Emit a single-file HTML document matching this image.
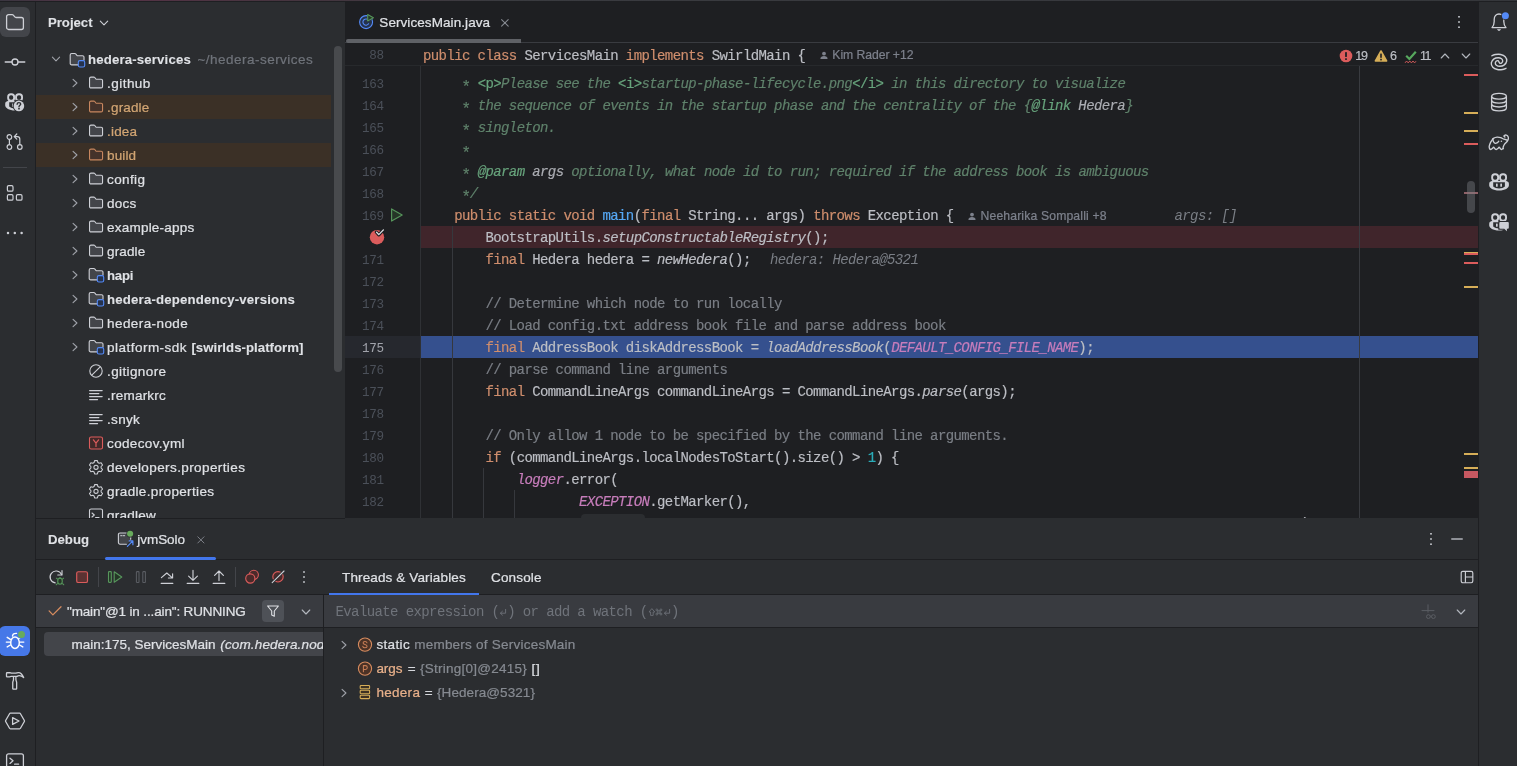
<!DOCTYPE html>
<html><head><meta charset="utf-8"><title>ServicesMain.java</title>
<style>
*{box-sizing:border-box;margin:0;padding:0}
html,body{width:1517px;height:766px;overflow:hidden;background:#2B2D30}
body{position:relative;font-family:"Liberation Sans", sans-serif;font-size:13px;color:#DFE1E5}
#root{position:absolute;left:0;top:0;width:1517px;height:766px;will-change:transform}
.a{position:absolute}
.t{position:absolute;white-space:pre;line-height:20px;height:20px;-webkit-text-stroke:0.22px}
#ed{position:absolute;left:345px;top:1px;width:1133px;height:517px;background:#1E1F22;overflow:hidden}
.cl{position:absolute;left:78px;white-space:pre;font-family:"Liberation Mono", monospace;font-size:14px;letter-spacing:-0.6px;line-height:22px;height:22px;color:#BCBEC4;-webkit-text-stroke:0.18px}
.ln{position:absolute;left:0;width:38.6px;text-align:right;font-family:"Liberation Mono", monospace;font-size:12.6px;letter-spacing:-0.36px;padding-top:1px;line-height:22px;height:22px;color:#4B5059}
.ln.cur{color:#A1A3AB}
.as{display:inline-block;position:relative;top:4.4px;font-style:normal;transform:scale(1.12);line-height:10px}
.k{color:#CF8E6D} .c{color:#7A7E85} .dc{color:#5F826B;font-style:italic} .dm{color:#67A37C} .dt{color:#67A37C;font-style:italic}
.dp{color:#ABADB3;font-style:italic} .fn{color:#56A8F5} .sf{color:#C77DBB;font-style:italic} .nu{color:#2AACB8} .i{font-style:italic}
.hint{position:absolute;white-space:pre;font-family:"Liberation Mono", monospace;font-size:14px;letter-spacing:-0.6px;line-height:22px;color:#7A7E85;font-style:italic}
</style></head>
<body>
<div id="root">

<!-- top edge -->
<div class="a" style="left:0;top:0;width:1517px;height:1px;background:linear-gradient(90deg,#3A3640 0,#573347 100px,#45353F 300px,#3A3B40 500px,#35373B 1517px)"></div>
<div class="a" style="left:0;top:1px;width:1517px;height:1px;background:#1E1F22"></div>
<!-- left stripe -->
<div class="a" style="left:35px;top:1px;width:1px;height:765px;background:#1E1F22"></div>
<div class="a" style="left:0;top:7px;width:30px;height:30px;border-radius:6px;background:#43454A"></div>
<svg style="position:absolute;left:5px;top:12px;" width="20" height="20" viewBox="0 0 20 20" fill="none"><path d="M1.6 4.6 a2 2 0 0 1 2 -2 h3.5 a1.6 1.6 0 0 1 1.2 .55 l1.5 1.8 a1.6 1.6 0 0 0 1.2 .55 h5.4 a2 2 0 0 1 2 2 v8 a2 2 0 0 1 -2 2 h-12.8 a2 2 0 0 1 -2 -2 z" stroke="#CED0D6" stroke-width="1.3"/></svg>
<svg style="position:absolute;left:4px;top:54px;" width="22" height="16" viewBox="0 0 22 16" fill="none"><circle cx="11" cy="8" r="3" stroke="#CED0D6" stroke-width="1.3"/><path d="M1.2 8H8M14 8h6.8" stroke="#CED0D6" stroke-width="1.3" stroke-linecap="round"/></svg>
<svg style="position:absolute;left:1px;top:88px;" width="28" height="28" viewBox="0 0 28 28" fill="none"><mask id="mq" maskUnits="userSpaceOnUse" x="0" y="0" width="28" height="28"><rect width="28" height="28" fill="#fff"/><circle cx="17.9" cy="17.9" r="6.3" fill="#000"/><rect x="14" y="12.9" width="14" height="15" fill="#000"/></mask><g mask="url(#mq)"><path d="M6.8 13.1 C5 13.6 4.2 14.6 4.2 15.8 V17.4 C4.2 19.6 8 22.5 14.05 22.5 C20.1 22.5 23.9 19.6 23.9 17.4 V15.8 C23.9 14.6 23.1 13.6 21.3 13.1 Z" fill="#CED0D6"/><path d="M8.2 14.3 H19.9 V18.6 C18.6 19.8 16.4 20.5 14.05 20.5 C11.7 20.5 9.5 19.8 8.2 18.6 Z" fill="#2B2D30"/><rect x="11" y="15.4" width="1.7" height="3.3" rx=".5" fill="#CED0D6"/><rect x="15.3" y="15.4" width="1.7" height="3.3" rx=".5" fill="#CED0D6"/><rect x="7.15" y="6.25" width="6" height="6.4" rx="2.7" stroke="#CED0D6" stroke-width="1.9" fill="#2B2D30"/><rect x="15.05" y="6.25" width="6" height="6.4" rx="2.7" stroke="#CED0D6" stroke-width="1.9" fill="#2B2D30"/></g><circle cx="17.9" cy="17.9" r="5.3" fill="#CED0D6"/><path d="M16.1 16.3 C16.1 15.2 16.9 14.6 17.9 14.6 C19 14.6 19.7 15.2 19.7 16.1 C19.7 17.3 18 17.4 18 18.7" stroke="#2B2D30" stroke-width="1.35" stroke-linecap="round"/><circle cx="18" cy="20.7" r=".9" fill="#2B2D30"/></svg>
<svg style="position:absolute;left:5px;top:132px;" width="20" height="20" viewBox="0 0 20 20" fill="none"><circle cx="4.4" cy="5" r="2.3" stroke="#CED0D6" stroke-width="1.2"/><circle cx="4.4" cy="15" r="2.3" stroke="#CED0D6" stroke-width="1.2"/><circle cx="14.8" cy="15" r="2.3" stroke="#CED0D6" stroke-width="1.2"/><path d="M4.4 7.4V12.6" stroke="#CED0D6" stroke-width="1.2"/><path d="M14.8 12.6 V7 a2.4 2.4 0 0 0 -2.4 -2.4 H9.4 M11.8 2 L9.2 4.6 L11.8 7.2" stroke="#CED0D6" stroke-width="1.2" stroke-linecap="round" stroke-linejoin="round"/></svg>
<div style="position:absolute;left:3px;top:167px;width:24px;height:1px;background:#43454A"></div>
<svg style="position:absolute;left:5px;top:183px;" width="20" height="20" viewBox="0 0 20 20" fill="none"><rect x="2.4" y="2.6" width="5.6" height="5.6" rx="1.3" stroke="#CED0D6" stroke-width="1.2"/><rect x="2.4" y="11.6" width="5.6" height="5.6" rx="1.3" stroke="#CED0D6" stroke-width="1.2"/><rect x="11.4" y="11.6" width="5.6" height="5.6" rx="1.3" stroke="#CED0D6" stroke-width="1.2"/></svg>
<svg style="position:absolute;left:5px;top:229px;" width="20" height="8" viewBox="0 0 20 8" fill="none"><circle cx="3" cy="4" r="1.25" fill="#CED0D6"/><circle cx="9.8" cy="4" r="1.25" fill="#CED0D6"/><circle cx="16.6" cy="4" r="1.25" fill="#CED0D6"/></svg>
<div style="position:absolute;left:-1px;top:626px;width:31px;height:30px;border-radius:6px;background:#4678E8"></div>
<svg style="position:absolute;left:0px;top:623px;" width="36" height="36" viewBox="0 0 36 36" fill="none"><ellipse cx="15" cy="19.7" rx="4.3" ry="5.8" stroke="#fff" stroke-width="1.45"/><path d="M12.5 13.1 C12.6 11.2 14 10.3 16.6 10.4" stroke="#fff" stroke-width="1.4" stroke-linecap="round"/><path d="M7.2 14.3 L10.4 16.4 M6.3 19.1 H10.6 M7.2 23.9 L10.4 22 M19.6 19.1 H23.8 M19.6 22 L22.8 23.9 M18.8 15.4 L20 14.6" stroke="#fff" stroke-width="1.4" stroke-linecap="round"/><circle cx="21.5" cy="11.5" r="4.1" fill="#4678E8"/><circle cx="21.5" cy="11.5" r="3.5" fill="#68AB5C"/></svg>
<svg style="position:absolute;left:1px;top:667px;" width="28" height="28" viewBox="0 0 28 28" fill="none"><path d="M5.5 6.4 a.65 .65 0 0 1 .65 -.65 H8.8 c.7 0 1.1 .35 1.8 .35 h3.6 c1.3 0 2.2 -.55 3.4 -.55 c2.3 0 3.7 1.9 5.1 5 c-1.6 -1.5 -3 -2 -4.6 -2 c-.9 0 -1.6 .5 -2.2 .9 H10.2 c-.7 0 -1.2 .45 -1.9 .45 H6.15 a.65 .65 0 0 1 -.65 -.65 Z" stroke="#CED0D6" stroke-width="1.3" stroke-linejoin="round"/><path d="M12.5 9.9 V12.6 c0 1.1 -.75 1.7 -.75 2.9 V21.4 a.8 .8 0 0 0 .8 .8 h2.3 a.8 .8 0 0 0 .8 -.8 V15.5 c0 -1.2 -.75 -1.8 -.75 -2.9 V9.9" stroke="#CED0D6" stroke-width="1.3" stroke-linejoin="round"/></svg>
<svg style="position:absolute;left:4px;top:711px;" width="22" height="20" viewBox="0 0 22 20" fill="none"><path d="M6.4 2.2 h9.2 a1 1 0 0 1 .85 .5 l3.9 6.8 a1 1 0 0 1 0 1 l-3.9 6.8 a1 1 0 0 1 -.85 .5 h-9.2 a1 1 0 0 1 -.85 -.5 l-3.9 -6.8 a1 1 0 0 1 0 -1 l3.9 -6.8 a1 1 0 0 1 .85 -.5 z" stroke="#CED0D6" stroke-width="1.3"/><path d="M8.6 6.6 L15 10 L8.6 13.4 Z" stroke="#CED0D6" stroke-width="1.3" stroke-linejoin="round"/></svg>
<svg style="position:absolute;left:5px;top:752px;" width="20" height="20" viewBox="0 0 20 20" fill="none"><rect x="1.6" y="1.8" width="16.8" height="15" rx="2" stroke="#CED0D6" stroke-width="1.3"/><path d="M5 6.2 L8 8.8 L5 11.4 M9.6 12.2 h4" stroke="#CED0D6" stroke-width="1.3" stroke-linecap="round" stroke-linejoin="round"/></svg>
<!-- project panel -->
<div class="a" style="left:36px;top:95px;width:295px;height:24px;background:#3B3026"></div>
<div class="a" style="left:36px;top:143px;width:295px;height:24px;background:#3B3026"></div>
<div class="a" style="left:36px;top:1px;width:309px;height:517px;overflow:hidden">
 <div class="a" style="left:-36px;top:-1px;width:345px;height:518px">
 <svg style="position:absolute;left:50.2px;top:55.3px;" width="12" height="8" viewBox="0 0 12 8" fill="none"><path d="M2.4 2.2 L6 5.8 L9.6 2.2" stroke="#A0A3AA" stroke-width="1.1" stroke-linecap="round" stroke-linejoin="round"/></svg>
<svg style="position:absolute;left:68.6px;top:51.6px;" width="18" height="16" viewBox="0 0 18 16" fill="none"><path d="M10 12.9 h-7.3 a1.5 1.5 0 0 1 -1.5 -1.5 v-8.4 a1.5 1.5 0 0 1 1.5 -1.5 h3.1 a1.2 1.2 0 0 1 .9 .4 l1.2 1.4 a1.2 1.2 0 0 0 .9 .4 h4.7 a1.5 1.5 0 0 1 1.5 1.5 v3.4" stroke="#CED0D6" stroke-width="1.1" fill="#43454A"/><rect x="9.3" y="8.6" width="6.4" height="6.4" rx="1.6" fill="#25324D" stroke="#548AF7" stroke-width="1.1"/></svg>
<svg style="position:absolute;left:71px;top:77.3px;" width="8" height="12" viewBox="0 0 8 12" fill="none"><path d="M2.05 2.4 L5.95 6 L2.05 9.6" stroke="#A0A3AA" stroke-width="1.1" stroke-linecap="round" stroke-linejoin="round"/></svg>
<svg style="position:absolute;left:88.1px;top:75.3px;" width="16" height="14" viewBox="0 0 16 14" fill="none"><path d="M1.55 3.5 a1.4 1.4 0 0 1 1.4 -1.4 h2.9 a1.2 1.2 0 0 1 .9 .4 l1.1 1.3 a1.2 1.2 0 0 0 .9 .4 h4.4 a1.4 1.4 0 0 1 1.4 1.4 v5.9 a1.4 1.4 0 0 1 -1.4 1.4 h-10.2 a1.4 1.4 0 0 1 -1.4 -1.4 z" stroke="#CED0D6" stroke-width="1.1" fill="#43454A"/></svg>
<svg style="position:absolute;left:71px;top:101.3px;" width="8" height="12" viewBox="0 0 8 12" fill="none"><path d="M2.05 2.4 L5.95 6 L2.05 9.6" stroke="#A0A3AA" stroke-width="1.1" stroke-linecap="round" stroke-linejoin="round"/></svg>
<svg style="position:absolute;left:88.1px;top:99.3px;" width="16" height="14" viewBox="0 0 16 14" fill="none"><path d="M1.55 3.5 a1.4 1.4 0 0 1 1.4 -1.4 h2.9 a1.2 1.2 0 0 1 .9 .4 l1.1 1.3 a1.2 1.2 0 0 0 .9 .4 h4.4 a1.4 1.4 0 0 1 1.4 1.4 v5.9 a1.4 1.4 0 0 1 -1.4 1.4 h-10.2 a1.4 1.4 0 0 1 -1.4 -1.4 z" stroke="#C8875F" stroke-width="1.1" fill="#44322A"/></svg>
<svg style="position:absolute;left:71px;top:125.30000000000001px;" width="8" height="12" viewBox="0 0 8 12" fill="none"><path d="M2.05 2.4 L5.95 6 L2.05 9.6" stroke="#A0A3AA" stroke-width="1.1" stroke-linecap="round" stroke-linejoin="round"/></svg>
<svg style="position:absolute;left:88.1px;top:123.3px;" width="16" height="14" viewBox="0 0 16 14" fill="none"><path d="M1.55 3.5 a1.4 1.4 0 0 1 1.4 -1.4 h2.9 a1.2 1.2 0 0 1 .9 .4 l1.1 1.3 a1.2 1.2 0 0 0 .9 .4 h4.4 a1.4 1.4 0 0 1 1.4 1.4 v5.9 a1.4 1.4 0 0 1 -1.4 1.4 h-10.2 a1.4 1.4 0 0 1 -1.4 -1.4 z" stroke="#CED0D6" stroke-width="1.1" fill="#43454A"/></svg>
<svg style="position:absolute;left:71px;top:149.3px;" width="8" height="12" viewBox="0 0 8 12" fill="none"><path d="M2.05 2.4 L5.95 6 L2.05 9.6" stroke="#A0A3AA" stroke-width="1.1" stroke-linecap="round" stroke-linejoin="round"/></svg>
<svg style="position:absolute;left:88.1px;top:147.3px;" width="16" height="14" viewBox="0 0 16 14" fill="none"><path d="M1.55 3.5 a1.4 1.4 0 0 1 1.4 -1.4 h2.9 a1.2 1.2 0 0 1 .9 .4 l1.1 1.3 a1.2 1.2 0 0 0 .9 .4 h4.4 a1.4 1.4 0 0 1 1.4 1.4 v5.9 a1.4 1.4 0 0 1 -1.4 1.4 h-10.2 a1.4 1.4 0 0 1 -1.4 -1.4 z" stroke="#C8875F" stroke-width="1.1" fill="#44322A"/></svg>
<svg style="position:absolute;left:71px;top:173.3px;" width="8" height="12" viewBox="0 0 8 12" fill="none"><path d="M2.05 2.4 L5.95 6 L2.05 9.6" stroke="#A0A3AA" stroke-width="1.1" stroke-linecap="round" stroke-linejoin="round"/></svg>
<svg style="position:absolute;left:88.1px;top:171.3px;" width="16" height="14" viewBox="0 0 16 14" fill="none"><path d="M1.55 3.5 a1.4 1.4 0 0 1 1.4 -1.4 h2.9 a1.2 1.2 0 0 1 .9 .4 l1.1 1.3 a1.2 1.2 0 0 0 .9 .4 h4.4 a1.4 1.4 0 0 1 1.4 1.4 v5.9 a1.4 1.4 0 0 1 -1.4 1.4 h-10.2 a1.4 1.4 0 0 1 -1.4 -1.4 z" stroke="#CED0D6" stroke-width="1.1" fill="#43454A"/></svg>
<svg style="position:absolute;left:71px;top:197.3px;" width="8" height="12" viewBox="0 0 8 12" fill="none"><path d="M2.05 2.4 L5.95 6 L2.05 9.6" stroke="#A0A3AA" stroke-width="1.1" stroke-linecap="round" stroke-linejoin="round"/></svg>
<svg style="position:absolute;left:88.1px;top:195.3px;" width="16" height="14" viewBox="0 0 16 14" fill="none"><path d="M1.55 3.5 a1.4 1.4 0 0 1 1.4 -1.4 h2.9 a1.2 1.2 0 0 1 .9 .4 l1.1 1.3 a1.2 1.2 0 0 0 .9 .4 h4.4 a1.4 1.4 0 0 1 1.4 1.4 v5.9 a1.4 1.4 0 0 1 -1.4 1.4 h-10.2 a1.4 1.4 0 0 1 -1.4 -1.4 z" stroke="#CED0D6" stroke-width="1.1" fill="#43454A"/></svg>
<svg style="position:absolute;left:71px;top:221.3px;" width="8" height="12" viewBox="0 0 8 12" fill="none"><path d="M2.05 2.4 L5.95 6 L2.05 9.6" stroke="#A0A3AA" stroke-width="1.1" stroke-linecap="round" stroke-linejoin="round"/></svg>
<svg style="position:absolute;left:88.1px;top:219.3px;" width="16" height="14" viewBox="0 0 16 14" fill="none"><path d="M1.55 3.5 a1.4 1.4 0 0 1 1.4 -1.4 h2.9 a1.2 1.2 0 0 1 .9 .4 l1.1 1.3 a1.2 1.2 0 0 0 .9 .4 h4.4 a1.4 1.4 0 0 1 1.4 1.4 v5.9 a1.4 1.4 0 0 1 -1.4 1.4 h-10.2 a1.4 1.4 0 0 1 -1.4 -1.4 z" stroke="#CED0D6" stroke-width="1.1" fill="#43454A"/></svg>
<svg style="position:absolute;left:71px;top:245.3px;" width="8" height="12" viewBox="0 0 8 12" fill="none"><path d="M2.05 2.4 L5.95 6 L2.05 9.6" stroke="#A0A3AA" stroke-width="1.1" stroke-linecap="round" stroke-linejoin="round"/></svg>
<svg style="position:absolute;left:88.1px;top:243.3px;" width="16" height="14" viewBox="0 0 16 14" fill="none"><path d="M1.55 3.5 a1.4 1.4 0 0 1 1.4 -1.4 h2.9 a1.2 1.2 0 0 1 .9 .4 l1.1 1.3 a1.2 1.2 0 0 0 .9 .4 h4.4 a1.4 1.4 0 0 1 1.4 1.4 v5.9 a1.4 1.4 0 0 1 -1.4 1.4 h-10.2 a1.4 1.4 0 0 1 -1.4 -1.4 z" stroke="#CED0D6" stroke-width="1.1" fill="#43454A"/></svg>
<svg style="position:absolute;left:71px;top:269.3px;" width="8" height="12" viewBox="0 0 8 12" fill="none"><path d="M2.05 2.4 L5.95 6 L2.05 9.6" stroke="#A0A3AA" stroke-width="1.1" stroke-linecap="round" stroke-linejoin="round"/></svg>
<svg style="position:absolute;left:87.6px;top:267.4px;" width="18" height="16" viewBox="0 0 18 16" fill="none"><path d="M10 12.9 h-7.3 a1.5 1.5 0 0 1 -1.5 -1.5 v-8.4 a1.5 1.5 0 0 1 1.5 -1.5 h3.1 a1.2 1.2 0 0 1 .9 .4 l1.2 1.4 a1.2 1.2 0 0 0 .9 .4 h4.7 a1.5 1.5 0 0 1 1.5 1.5 v3.4" stroke="#CED0D6" stroke-width="1.1" fill="#43454A"/><rect x="9.3" y="8.6" width="6.4" height="6.4" rx="1.6" fill="#25324D" stroke="#548AF7" stroke-width="1.1"/></svg>
<svg style="position:absolute;left:71px;top:293.3px;" width="8" height="12" viewBox="0 0 8 12" fill="none"><path d="M2.05 2.4 L5.95 6 L2.05 9.6" stroke="#A0A3AA" stroke-width="1.1" stroke-linecap="round" stroke-linejoin="round"/></svg>
<svg style="position:absolute;left:87.6px;top:291.4px;" width="18" height="16" viewBox="0 0 18 16" fill="none"><path d="M10 12.9 h-7.3 a1.5 1.5 0 0 1 -1.5 -1.5 v-8.4 a1.5 1.5 0 0 1 1.5 -1.5 h3.1 a1.2 1.2 0 0 1 .9 .4 l1.2 1.4 a1.2 1.2 0 0 0 .9 .4 h4.7 a1.5 1.5 0 0 1 1.5 1.5 v3.4" stroke="#CED0D6" stroke-width="1.1" fill="#43454A"/><rect x="9.3" y="8.6" width="6.4" height="6.4" rx="1.6" fill="#25324D" stroke="#548AF7" stroke-width="1.1"/></svg>
<svg style="position:absolute;left:71px;top:317.3px;" width="8" height="12" viewBox="0 0 8 12" fill="none"><path d="M2.05 2.4 L5.95 6 L2.05 9.6" stroke="#A0A3AA" stroke-width="1.1" stroke-linecap="round" stroke-linejoin="round"/></svg>
<svg style="position:absolute;left:88.1px;top:315.3px;" width="16" height="14" viewBox="0 0 16 14" fill="none"><path d="M1.55 3.5 a1.4 1.4 0 0 1 1.4 -1.4 h2.9 a1.2 1.2 0 0 1 .9 .4 l1.1 1.3 a1.2 1.2 0 0 0 .9 .4 h4.4 a1.4 1.4 0 0 1 1.4 1.4 v5.9 a1.4 1.4 0 0 1 -1.4 1.4 h-10.2 a1.4 1.4 0 0 1 -1.4 -1.4 z" stroke="#CED0D6" stroke-width="1.1" fill="#43454A"/></svg>
<svg style="position:absolute;left:71px;top:341.3px;" width="8" height="12" viewBox="0 0 8 12" fill="none"><path d="M2.05 2.4 L5.95 6 L2.05 9.6" stroke="#A0A3AA" stroke-width="1.1" stroke-linecap="round" stroke-linejoin="round"/></svg>
<svg style="position:absolute;left:87.6px;top:339.4px;" width="18" height="16" viewBox="0 0 18 16" fill="none"><path d="M10 12.9 h-7.3 a1.5 1.5 0 0 1 -1.5 -1.5 v-8.4 a1.5 1.5 0 0 1 1.5 -1.5 h3.1 a1.2 1.2 0 0 1 .9 .4 l1.2 1.4 a1.2 1.2 0 0 0 .9 .4 h4.7 a1.5 1.5 0 0 1 1.5 1.5 v3.4" stroke="#CED0D6" stroke-width="1.1" fill="#43454A"/><rect x="9.3" y="8.6" width="6.4" height="6.4" rx="1.6" fill="#25324D" stroke="#548AF7" stroke-width="1.1"/></svg>
<svg style="position:absolute;left:88px;top:363px;" width="16" height="16" viewBox="0 0 16 16" fill="none"><circle cx="8" cy="8" r="6.2" stroke="#CED0D6" stroke-width="1.1"/><path d="M3.8 12.2 L12.2 3.8" stroke="#CED0D6" stroke-width="1.1"/></svg>
<svg style="position:absolute;left:88px;top:387px;" width="16" height="16" viewBox="0 0 16 16" fill="none"><path d="M1.6 3.6h12.6M1.6 6.6h9.3M1.6 9.6h12.6M1.6 12.6h8" stroke="#CED0D6" stroke-width="1.1" stroke-linecap="round"/></svg>
<svg style="position:absolute;left:88px;top:411px;" width="16" height="16" viewBox="0 0 16 16" fill="none"><path d="M1.6 3.6h12.6M1.6 6.6h9.3M1.6 9.6h12.6M1.6 12.6h8" stroke="#CED0D6" stroke-width="1.1" stroke-linecap="round"/></svg>
<svg style="position:absolute;left:88px;top:435px;" width="16" height="16" viewBox="0 0 16 16" fill="none"><rect x="1.5" y="2" width="13" height="12" rx="1.6" fill="#402929" stroke="#DB5C5C" stroke-width="1.1"/><path d="M5.4 4.8 L8 8.2 L10.6 4.8 M8 8.2 V11.4" stroke="#DB5C5C" stroke-width="1.2" stroke-linecap="round" stroke-linejoin="round"/></svg>
<svg style="position:absolute;left:88px;top:458.8px;" width="16" height="16.5" viewBox="0 0 16 16.5" fill="none"><path d="M6.6 1.6h2.8l.5 1.9 1.3.75 1.9-.55 1.4 2.4-1.4 1.4v1.5l1.4 1.4-1.4 2.4-1.9-.55-1.3.75-.5 1.9H6.6l-.5-1.9-1.3-.75-1.9.55-1.4-2.4 1.4-1.4V7.5L1.5 6.1l1.4-2.4 1.9.55 1.3-.75z" stroke="#CED0D6" stroke-width="1.05" stroke-linejoin="round"/><circle cx="8" cy="8.25" r="2.1" stroke="#CED0D6" stroke-width="1.05"/></svg>
<svg style="position:absolute;left:88px;top:482.8px;" width="16" height="16.5" viewBox="0 0 16 16.5" fill="none"><path d="M6.6 1.6h2.8l.5 1.9 1.3.75 1.9-.55 1.4 2.4-1.4 1.4v1.5l1.4 1.4-1.4 2.4-1.9-.55-1.3.75-.5 1.9H6.6l-.5-1.9-1.3-.75-1.9.55-1.4-2.4 1.4-1.4V7.5L1.5 6.1l1.4-2.4 1.9.55 1.3-.75z" stroke="#CED0D6" stroke-width="1.05" stroke-linejoin="round"/><circle cx="8" cy="8.25" r="2.1" stroke="#CED0D6" stroke-width="1.05"/></svg>
<svg style="position:absolute;left:88px;top:507px;" width="16" height="16" viewBox="0 0 16 16" fill="none"><rect x="1.5" y="2" width="13" height="12" rx="1.6" stroke="#CED0D6" stroke-width="1.1"/><path d="M4 6 L6.3 8 L4 10 M7.6 10.6h3.4" stroke="#CED0D6" stroke-width="1.1" stroke-linecap="round" stroke-linejoin="round"/></svg>
 </div>
</div>
<svg style="position:absolute;left:98px;top:18.8px;" width="12" height="8" viewBox="0 0 12 8" fill="none"><path d="M2.3 2.1 L6 5.9 L9.7 2.1" stroke="#CED0D6" stroke-width="1.1" stroke-linecap="round" stroke-linejoin="round"/></svg>
<div class="a" style="left:334.2px;top:46px;width:7.7px;height:326px;border-radius:4px;background:#484A4D"></div>

<div id="ed">
  <!-- tab bar -->
  <div class="a" style="left:0;top:41px;width:1133px;height:1px;background:#393B40"></div>
  <div class="a" style="left:1px;top:38px;width:175px;height:4px;border-radius:2px 0 0 2px;background:#5F6166"></div>
  <!-- code area (coords relative to #ed: x-345, y-1) -->
  <div class="a" style="left:0;top:0;width:1133px;height:517px;transform:translate(0,-1px)">
    <!-- current line gutter -->
    <div class="a" style="left:0;top:336px;width:76px;height:22px;background:#26282E"></div>
    <!-- gutter separator -->
    <div class="a" style="left:75px;top:66px;width:1px;height:452px;background:#2F3135"></div>
    <!-- breakpoint line -->
    <div class="a" style="left:76px;top:226px;width:1057px;height:22px;background:#40252B"></div>
    <!-- execution line -->
    <div class="a" style="left:76px;top:336px;width:1057px;height:22px;background:#35508E"></div>
    <!-- indent guides -->
    <div class="a" style="left:107px;top:226px;width:1px;height:292px;background:#36383D"></div>
    <div class="a" style="left:138.2px;top:468px;width:1px;height:50px;background:#36383D"></div>
    <div class="a" style="left:169.4px;top:490px;width:1px;height:28px;background:#36383D"></div>
    <!-- right margin -->
    <div class="a" style="left:1014px;top:66px;width:1px;height:452px;background:#393B40"></div>
    <div class="ln" style="top:73px">163</div>
<div class="ln" style="top:95px">164</div>
<div class="ln" style="top:117px">165</div>
<div class="ln" style="top:139px">166</div>
<div class="ln" style="top:161px">167</div>
<div class="ln" style="top:183px">168</div>
<div class="ln" style="top:205px">169</div>
<div class="ln" style="top:249px">171</div>
<div class="ln" style="top:271px">172</div>
<div class="ln" style="top:293px">173</div>
<div class="ln" style="top:315px">174</div>
<div class="ln cur" style="top:337px">175</div>
<div class="ln" style="top:359px">176</div>
<div class="ln" style="top:381px">177</div>
<div class="ln" style="top:403px">178</div>
<div class="ln" style="top:425px">179</div>
<div class="ln" style="top:447px">180</div>
<div class="ln" style="top:469px">181</div>
<div class="ln" style="top:491px">182</div>
<div class="ln" style="top:513px">183</div>
    <div class="cl" style="top:73px"><span class="dc">     <span class="as">*</span> </span><span class="dm">&lt;p&gt;</span><span class="dc">Please see the </span><span class="dm">&lt;i&gt;</span><span class="dc">startup-phase-lifecycle.png</span><span class="dm">&lt;/i&gt;</span><span class="dc"> in this directory to visualize</span></div>
<div class="cl" style="top:95px"><span class="dc">     <span class="as">*</span> the sequence of events in the startup phase and the centrality of the {</span><span class="dt">@link</span><span class="dc"> </span><span class="dp">Hedera</span><span class="dc">}</span></div>
<div class="cl" style="top:117px"><span class="dc">     <span class="as">*</span> singleton.</span></div>
<div class="cl" style="top:139px"><span class="dc">     <span class="as">*</span></span></div>
<div class="cl" style="top:161px"><span class="dc">     <span class="as">*</span> </span><span class="dt">@param</span><span class="dc"> </span><span class="dp">args</span><span class="dc"> optionally, what node id to run; required if the address book is ambiguous</span></div>
<div class="cl" style="top:183px"><span class="dc">     <span class="as">*</span>/</span></div>
<div class="cl" style="top:205px">    <span class="k">public static void </span><span class="fn">main</span>(<span class="k">final </span>String... args) <span class="k">throws </span>Exception {</div>
<div class="cl" style="top:227px">        BootstrapUtils.<span class="i">setupConstructableRegistry</span>();</div>
<div class="cl" style="top:249px">        <span class="k">final </span>Hedera hedera = <span class="i">newHedera</span>();</div>
<div class="cl" style="top:293px"><span class="c">        // Determine which node to run locally</span></div>
<div class="cl" style="top:315px"><span class="c">        // Load config.txt address book file and parse address book</span></div>
<div class="cl" style="top:337px">        <span class="k">final </span>AddressBook diskAddressBook = <span class="i">loadAddressBook</span>(<span class="sf">DEFAULT_CONFIG_FILE_NAME</span>);</div>
<div class="cl" style="top:359px"><span class="c">        // parse command line arguments</span></div>
<div class="cl" style="top:381px">        <span class="k">final </span>CommandLineArgs commandLineArgs = CommandLineArgs.<span class="i">parse</span>(args);</div>
<div class="cl" style="top:425px"><span class="c">        // Only allow 1 node to be specified by the command line arguments.</span></div>
<div class="cl" style="top:447px">        <span class="k">if </span>(commandLineArgs.localNodesToStart().size() > <span class="nu">1</span>) {</div>
<div class="cl" style="top:469px">            <span class="sf">logger</span>.error(</div>
<div class="cl" style="top:491px">                    <span class="sf">EXCEPTION</span>.getMarker(),</div>
<div class="cl" style="top:513px"><span style="position:absolute;left:158.0px;top:1px;width:64px;height:20px;border-radius:4px;background:#2B2D30"></span>                    <span style="color:#868A91;font-size:11px;letter-spacing:0"> format: </span> <span style="color:#6AAB73;position:relative;top:1.6px">"Multiple nodes were supplied via the command line. Only one node can be specified."</span>);</div>
    <div class="hint" style="left:425px;top:249px">hedera: Hedera@5321</div>
    <div class="hint" style="left:829.5px;top:205px">args: []</div>
    <!-- sticky line -->
    <div class="a" style="left:0;top:43px;width:1133px;height:23px;background:#1E1F22;border-bottom:1px solid #27292C"></div>
    <div class="ln" style="top:44px">88</div>
    <div class="cl" style="top:44.5px"><span class="k">public class </span>ServicesMain <span class="k">implements </span>SwirldMain {</div>
    <!-- error stripe -->
    <div class="a" style="left:1119px;top:74px;width:14px;height:2px;background:#DB5C5C"></div>
    <div class="a" style="left:1119px;top:112px;width:14px;height:2px;background:#D6AE58"></div>
    <div class="a" style="left:1119px;top:130px;width:14px;height:2px;background:#D6AE58"></div>
    <div class="a" style="left:1119px;top:143px;width:14px;height:2px;background:#DB5C5C"></div>
    <div class="a" style="left:1119px;top:192px;width:14px;height:2px;background:#8F6268"></div>
    <div class="a" style="left:1119px;top:252px;width:14px;height:1px;background:#D6AE58"></div>
    <div class="a" style="left:1119px;top:253px;width:14px;height:2px;background:#DB5C5C"></div>
    <div class="a" style="left:1119px;top:262px;width:14px;height:2px;background:#DB5C5C"></div>
    <div class="a" style="left:1119px;top:286px;width:14px;height:2px;background:#D6AE58"></div>
    <div class="a" style="left:1119px;top:453px;width:14px;height:2px;background:#D6AE58"></div>
    <div class="a" style="left:1119px;top:467px;width:14px;height:2px;background:#D6AE58"></div>
    <div class="a" style="left:1119px;top:471px;width:14px;height:7px;background:#C75861"></div>
    <!-- editor scrollbar thumb -->
    <div class="a" style="left:1122px;top:181px;width:8px;height:32px;border-radius:4px;background:rgba(125,127,133,.42)"></div>
  </div>
</div>

<svg style="position:absolute;left:358px;top:14px;" width="18" height="18" viewBox="0 0 18 18" fill="none"><circle cx="8.1" cy="8.1" r="6.5" fill="#25324D" stroke="#548AF7" stroke-width="1.1"/><path d="M10.6 6.4 A3.1 3.1 0 1 0 10.6 9.8" stroke="#548AF7" stroke-width="1.1" stroke-linecap="round" fill="none"/><path d="M9.2 -0.6 v8.6 l7.6 -4.3 z" fill="#1E1F22"/><path d="M9.7 0.6 v6.4 l5.7 -3.2 z" fill="#253627" stroke="#57965C" stroke-width="1.1" stroke-linejoin="round"/></svg>
<svg style="position:absolute;left:500px;top:17.5px;" width="10" height="10" viewBox="0 0 10 10" fill="none"><path d="M1.6 1.6 L8.2 8.2 M8.2 1.6 L1.6 8.2" stroke="#868A91" stroke-width="1.05" stroke-linecap="round"/></svg>
<svg style="position:absolute;left:1456px;top:14px;" width="6" height="16" viewBox="0 0 6 16" fill="none"><rect x="2.2" y="2" width="1.6" height="1.6" fill="#CED0D6"/><rect x="2.2" y="7.2" width="1.6" height="1.6" fill="#CED0D6"/><rect x="2.2" y="12.4" width="1.6" height="1.6" fill="#CED0D6"/></svg>
<svg style="position:absolute;left:820px;top:50.5px;" width="8" height="8" viewBox="0 0 8 8" fill="none"><circle cx="4" cy="2.6" r="1.9" fill="#7D818C"/><path d="M.4 8 C.4 5.8 2 5 4 5 C6 5 7.6 5.8 7.6 8 Z" fill="#7D818C"/></svg>
<svg style="position:absolute;left:968px;top:212px;" width="8" height="8" viewBox="0 0 8 8" fill="none"><circle cx="4" cy="2.6" r="1.9" fill="#7D818C"/><path d="M.4 8 C.4 5.8 2 5 4 5 C6 5 7.6 5.8 7.6 8 Z" fill="#7D818C"/></svg>
<svg style="position:absolute;left:389px;top:206px;" width="16" height="18" viewBox="0 0 16 18" fill="none"><path d="M2.6 2.9 V15.1 L13.2 9 Z" fill="#253627" stroke="#57965C" stroke-width="1.15" stroke-linejoin="round"/></svg>
<svg style="position:absolute;left:369px;top:229px;" width="17" height="17" viewBox="0 0 17 17" fill="none"><circle cx="8" cy="8.2" r="7.2" fill="#DB5C5C"/><path d="M7.4 3.2 L9.8 5.8 L14.6 0.6" stroke="#1E1F22" stroke-width="3.2" stroke-linecap="round" stroke-linejoin="round"/><path d="M7.6 3.2 L9.8 5.6 L14.4 0.9" stroke="#DFE1E5" stroke-width="1.3" stroke-linecap="round" stroke-linejoin="round"/></svg>
<svg style="position:absolute;left:1339px;top:49px;" width="14" height="14" viewBox="0 0 14 14" fill="none"><circle cx="7" cy="7" r="6.3" fill="#DB5C5C"/><rect x="6.1" y="3" width="1.8" height="5" rx=".4" fill="#1E1F22"/><rect x="6.1" y="9.2" width="1.8" height="1.8" rx=".4" fill="#1E1F22"/></svg>
<svg style="position:absolute;left:1374px;top:49px;" width="14" height="14" viewBox="0 0 14 14" fill="none"><path d="M7 2 L12.6 12 H1.4 Z" fill="#D6AE58" stroke="#D6AE58" stroke-width="1.6" stroke-linejoin="round"/><rect x="6.2" y="4.6" width="1.6" height="4.2" fill="#1E1F22"/><rect x="6.2" y="9.8" width="1.6" height="1.6" fill="#1E1F22"/></svg>
<svg style="position:absolute;left:1404px;top:49px;" width="14" height="15" viewBox="0 0 14 15" fill="none"><path d="M2.2 6.8 L5.4 10 L11.8 2.8" stroke="#57A85E" stroke-width="2.2" stroke-linecap="butt" stroke-linejoin="miter"/><path d="M1 13.9 l1.6 -1.9 l1.6 1.9 l1.6 -1.9 l1.6 1.9 l1.6 -1.9 l1.6 1.9 l1.4 -1.7" stroke="#DB5C5C" stroke-width=".9" fill="none"/></svg>
<svg style="position:absolute;left:1438.8px;top:52.4px;" width="12" height="8" viewBox="0 0 12 8" fill="none"><path d="M2.2 6.0 L6 2.0 L9.8 6.0" stroke="#B4B8BF" stroke-width="1.1" stroke-linecap="round" stroke-linejoin="round"/></svg>
<svg style="position:absolute;left:1460px;top:52.4px;" width="12" height="8" viewBox="0 0 12 8" fill="none"><path d="M2.2 2.0 L6 6.0 L9.8 2.0" stroke="#B4B8BF" stroke-width="1.1" stroke-linecap="round" stroke-linejoin="round"/></svg>
<!-- right stripe -->
<div class="a" style="left:1478px;top:1px;width:1px;height:765px;background:#1E1F22"></div>
<svg style="position:absolute;left:1489px;top:11px;" width="22" height="22" viewBox="0 0 22 22" fill="none"><path d="M3 16.6 C4.6 15 5.2 13.2 5.2 10.6 V8.4 C5.2 5.2 7.2 3 10 3 C12.8 3 14.8 5.2 14.8 8.4 V10.6 C14.8 13.2 15.4 15 17 16.6 Z" stroke="#CED0D6" stroke-width="1.3" stroke-linejoin="round"/><path d="M8.4 18.6 h3.2 l-1.6 1.2 z" fill="#CED0D6" stroke="#CED0D6" stroke-width=".6"/><circle cx="16.4" cy="4.7" r="4.3" fill="#2B2D30"/><circle cx="16.4" cy="4.7" r="3.5" fill="#548AF7"/></svg>
<svg style="position:absolute;left:1485.07px;top:48.07px;" width="28" height="28" viewBox="0 0 28 28" fill="none"><path d="M21.00 20.30 C20.43 20.49 19.03 21.25 17.60 21.45 C16.17 21.65 14.03 21.88 12.40 21.50 C10.77 21.12 8.82 20.30 7.80 19.20 C6.78 18.10 6.10 16.28 6.30 14.90 C6.50 13.52 7.85 11.76 9.00 10.90 C10.15 10.04 11.93 9.77 13.20 9.75 C14.47 9.73 15.85 10.24 16.60 10.80 C17.35 11.36 17.70 12.40 17.70 13.10 C17.70 13.80 17.07 14.64 16.60 15.00 C16.13 15.36 15.33 15.42 14.90 15.25 C14.47 15.08 14.30 14.42 14.00 14.00 C13.70 13.58 13.53 12.92 13.10 12.75 C12.67 12.58 11.87 12.64 11.40 13.00 C10.93 13.36 10.30 14.20 10.30 14.90 C10.30 15.60 10.65 16.64 11.40 17.20 C12.15 17.76 13.53 18.27 14.80 18.25 C16.07 18.23 17.85 17.96 19.00 17.10 C20.15 16.24 21.50 14.48 21.70 13.10 C21.90 11.72 21.22 9.90 20.20 8.80 C19.18 7.70 17.23 6.88 15.60 6.50 C13.97 6.12 11.83 6.35 10.40 6.55 C8.97 6.75 7.57 7.51 7.00 7.70" stroke="#CED0D6" stroke-width="1.4" stroke-linecap="round"/></svg>
<svg style="position:absolute;left:1489px;top:91px;" width="22" height="22" viewBox="0 0 22 22" fill="none"><ellipse cx="10" cy="5.2" rx="7.4" ry="2.9" stroke="#CED0D6" stroke-width="1.3"/><path d="M2.6 5.2 V17 C2.6 18.6 5.9 19.9 10 19.9 C14.1 19.9 17.4 18.6 17.4 17 V5.2" stroke="#CED0D6" stroke-width="1.3"/><path d="M2.6 9.2 C2.6 10.8 5.9 12.1 10 12.1 C14.1 12.1 17.4 10.8 17.4 9.2 M2.6 13.1 C2.6 14.7 5.9 16 10 16 C14.1 16 17.4 14.7 17.4 13.1" stroke="#CED0D6" stroke-width="1.3"/></svg>
<svg style="position:absolute;left:1485px;top:128px;" width="28" height="28" viewBox="0 0 28 28" fill="none"><path d="M19.90 9.00 C19.73 8.87 18.95 8.48 18.90 8.20 C18.85 7.92 19.22 7.48 19.60 7.30 C19.98 7.12 20.65 6.93 21.20 7.10 C21.75 7.27 22.53 7.75 22.90 8.30 C23.27 8.85 23.48 9.58 23.40 10.40 C23.32 11.22 23.03 12.23 22.40 13.20 C21.77 14.17 20.28 15.27 19.60 16.20 C18.92 17.13 18.55 18.07 18.30 18.80 C18.05 19.53 18.13 20.30 18.10 20.60" stroke="#CED0D6" stroke-width="1.35" stroke-linecap="round"/><path d="M18.10 20.60 C17.85 20.75 17.07 21.50 16.60 21.50 C16.13 21.50 15.72 21.00 15.30 20.60 C14.88 20.20 14.50 19.10 14.10 19.10 C13.70 19.10 13.37 20.20 12.90 20.60 C12.43 21.00 11.82 21.50 11.30 21.50 C10.78 21.50 10.25 21.00 9.80 20.60 C9.35 20.20 9.02 19.10 8.60 19.10 C8.18 19.10 7.77 20.20 7.30 20.60 C6.83 21.00 6.25 21.48 5.80 21.50 C5.35 21.52 4.80 20.83 4.60 20.70" stroke="#CED0D6" stroke-width="1.35" stroke-linecap="round" stroke-linejoin="round"/><path d="M4.60 20.70 C4.53 20.30 4.05 19.32 4.20 18.30 C4.35 17.28 4.97 15.70 5.50 14.60 C6.03 13.50 6.92 12.42 7.40 11.70 C7.88 10.98 7.62 10.73 8.40 10.30 C9.18 9.87 10.90 9.22 12.10 9.10 C13.30 8.98 14.45 9.25 15.60 9.60 C16.75 9.95 17.88 10.77 19.00 11.20 C20.12 11.63 21.75 12.03 22.30 12.20" stroke="#CED0D6" stroke-width="1.35" stroke-linecap="round"/><path d="M7.90 10.80 C7.98 11.25 8.02 12.73 8.40 13.50 C8.78 14.27 9.53 15.20 10.20 15.40 C10.87 15.60 11.82 15.05 12.40 14.70 C12.98 14.35 13.48 13.53 13.70 13.30" stroke="#CED0D6" stroke-width="1.35" stroke-linecap="round"/><circle cx="16.4" cy="13.3" r=".8" fill="#CED0D6"/></svg>
<svg style="position:absolute;left:1485px;top:168px;" width="28" height="28" viewBox="0 0 28 28" fill="none"><g><path d="M6.8 13.1 C5 13.6 4.2 14.6 4.2 15.8 V17.4 C4.2 19.6 8 22.5 14.05 22.5 C20.1 22.5 23.9 19.6 23.9 17.4 V15.8 C23.9 14.6 23.1 13.6 21.3 13.1 Z" fill="#CED0D6"/><path d="M8.2 14.3 H19.9 V18.6 C18.6 19.8 16.4 20.5 14.05 20.5 C11.7 20.5 9.5 19.8 8.2 18.6 Z" fill="#2B2D30"/><rect x="11" y="15.4" width="1.7" height="3.3" rx=".5" fill="#CED0D6"/><rect x="15.3" y="15.4" width="1.7" height="3.3" rx=".5" fill="#CED0D6"/><rect x="7.15" y="6.25" width="6" height="6.4" rx="2.7" stroke="#CED0D6" stroke-width="1.9" fill="#2B2D30"/><rect x="15.05" y="6.25" width="6" height="6.4" rx="2.7" stroke="#CED0D6" stroke-width="1.9" fill="#2B2D30"/></g></svg>
<svg style="position:absolute;left:1485px;top:208px;" width="28" height="28" viewBox="0 0 28 28" fill="none"><mask id="mc" maskUnits="userSpaceOnUse" x="0" y="0" width="28" height="28"><rect width="28" height="28" fill="#fff"/><path d="M13.3 13.1 H24.8 V21.8 H22.9 V24.4 L18.4 21.8 H13.3 Z" fill="#000"/></mask><g mask="url(#mc)"><path d="M6.8 13.1 C5 13.6 4.2 14.6 4.2 15.8 V17.4 C4.2 19.6 8 22.5 14.05 22.5 C20.1 22.5 23.9 19.6 23.9 17.4 V15.8 C23.9 14.6 23.1 13.6 21.3 13.1 Z" fill="#CED0D6"/><path d="M8.2 14.3 H19.9 V18.6 C18.6 19.8 16.4 20.5 14.05 20.5 C11.7 20.5 9.5 19.8 8.2 18.6 Z" fill="#2B2D30"/><rect x="11" y="15.4" width="1.7" height="3.3" rx=".5" fill="#CED0D6"/><rect x="15.3" y="15.4" width="1.7" height="3.3" rx=".5" fill="#CED0D6"/><rect x="7.15" y="6.25" width="6" height="6.4" rx="2.7" stroke="#CED0D6" stroke-width="1.9" fill="#2B2D30"/><rect x="15.05" y="6.25" width="6" height="6.4" rx="2.7" stroke="#CED0D6" stroke-width="1.9" fill="#2B2D30"/></g><path d="M15.3 14.1 H22.8 a1 1 0 0 1 1 1 V19.8 a1 1 0 0 1 -1 1 H21.9 V23.2 L19.2 20.8 H15.3 a1 1 0 0 1 -1 -1 V15.1 a1 1 0 0 1 1 -1 Z" fill="#CED0D6"/></svg>
<!-- debug panel -->
<div class="a" style="left:36px;top:518px;width:1442px;height:248px;background:#2B2D30"></div>
<div class="a" style="left:36px;top:518px;width:309px;height:1px;background:#1E1F22"></div>
<div class="a" style="left:36px;top:559px;width:1442px;height:1px;background:#1E1F22"></div>
<div class="a" style="left:105px;top:556.8px;width:111px;height:3.2px;border-radius:1.6px;background:#4276EC"></div>
<div class="a" style="left:36px;top:594px;width:1442px;height:1px;background:#1E1F22"></div>
<div class="a" style="left:329px;top:592.6px;width:150px;height:2.4px;background:#4276EC"></div>
<!-- threads combo + evaluate field -->
<div class="a" style="left:36px;top:595px;width:287px;height:32px;background:#393B40"></div>
<div class="a" style="left:324px;top:595px;width:1154px;height:32px;background:#393B40"></div>
<div class="a" style="left:36px;top:627px;width:1442px;height:1px;background:#1E1F22"></div>
<div class="a" style="left:323px;top:595px;width:1px;height:171px;background:#1E1F22"></div>
<!-- frame row -->
<div class="a" style="left:44px;top:632px;width:279px;height:24px;border-radius:4px 0 0 4px;background:#43454A"></div>
<div class="a" style="left:335.5px;top:600.5px;font-family:'Liberation Mono',monospace;font-size:14px;letter-spacing:-0.6px;line-height:22px;color:#6F737A;white-space:pre">Evaluate expression (<svg width="7.8" height="10" viewBox="0 0 7.8 10" fill="none" style="display:inline-block;vertical-align:-1px"><path d="M6.6 2.4 V6.2 H1.6 M3.4 4.3 L1.4 6.2 L3.4 8.1" stroke="#6F737A" stroke-width=".9" stroke-linecap="round" stroke-linejoin="round"/></svg>) or add a watch (<svg width="7.8" height="10" viewBox="0 0 7.8 10" fill="none" style="display:inline-block;vertical-align:-1px"><path d="M3.9 1.6 L6.8 5 H5.2 V8.4 H2.6 V5 H1 Z" stroke="#6F737A" stroke-width=".85" stroke-linejoin="round"/></svg><svg width="7.8" height="10" viewBox="0 0 7.8 10" fill="none" style="display:inline-block;vertical-align:-1px"><path d="M2.8 3.8 H5 V6.2 H2.8 Z M2.8 3.8 V2.9 a.95 .95 0 1 0 -.95 .95 Z M5 3.8 V2.9 a.95 .95 0 1 1 .95 .95 Z M2.8 6.2 V7.1 a.95 .95 0 1 1 -.95 -.95 Z M5 6.2 V7.1 a.95 .95 0 1 0 .95 -.95 Z" stroke="#6F737A" stroke-width=".8" stroke-linejoin="round"/></svg><svg width="7.8" height="10" viewBox="0 0 7.8 10" fill="none" style="display:inline-block;vertical-align:-1px"><path d="M6.6 2.4 V6.2 H1.6 M3.4 4.3 L1.4 6.2 L3.4 8.1" stroke="#6F737A" stroke-width=".9" stroke-linecap="round" stroke-linejoin="round"/></svg>)</div>
<svg style="position:absolute;left:117px;top:530px;" width="18" height="18" viewBox="0 0 18 18" fill="none"><path d="M10 14.2 H3 a1.6 1.6 0 0 1 -1.6 -1.6 V4.6 a1.6 1.6 0 0 1 1.6 -1.6 h8.4 V6.4 H13.8 V10 L10 14.2 Z" fill="#43454A"/><path d="M9.4 14.2 H3 a1.6 1.6 0 0 1 -1.6 -1.6 V4.6 a1.6 1.6 0 0 1 1.6 -1.6 h7" stroke="#CED0D6" stroke-width="1.1" stroke-linecap="round"/><path d="M13.7 7.6 V9.2" stroke="#CED0D6" stroke-width="1.1" stroke-linecap="round"/><path d="M3.7 5.7 h1.4 M6.3 5.7 h1.4" stroke="#CED0D6" stroke-width="1" stroke-linecap="round"/><circle cx="13.1" cy="3.8" r="3.7" fill="#2B2D30"/><circle cx="13.1" cy="3.8" r="3.05" fill="#68AB5C"/><path d="M10.4 16.4 L15.6 11.2 M12.2 10.9 H15.9 V14.7" stroke="#548AF7" stroke-width="1.2" stroke-linecap="round" stroke-linejoin="round"/></svg>
<svg style="position:absolute;left:195.8px;top:535px;" width="10" height="10" viewBox="0 0 10 10" fill="none"><path d="M1.8 1.8 L8 8 M8 1.8 L1.8 8" stroke="#7E828A" stroke-width=".95" stroke-linecap="round"/></svg>
<svg style="position:absolute;left:1428px;top:531px;" width="6" height="16" viewBox="0 0 6 16" fill="none"><rect x="2.2" y="2" width="1.6" height="1.6" fill="#CED0D6"/><rect x="2.2" y="7.2" width="1.6" height="1.6" fill="#CED0D6"/><rect x="2.2" y="12.4" width="1.6" height="1.6" fill="#CED0D6"/></svg>
<div style="position:absolute;left:1450.6px;top:538.4px;width:12.8px;height:1.2px;background:#8E9096;border-radius:1px"></div>
<svg style="position:absolute;left:48px;top:568px;" width="18" height="18" viewBox="0 0 18 18" fill="none"><path d="M7.2 14.9 A6 6 0 1 1 13.6 6.6" stroke="#CED0D6" stroke-width="1.15" stroke-linecap="round"/><path d="M14 2.6 V7 H9.8" stroke="#CED0D6" stroke-width="1.15" stroke-linecap="round" stroke-linejoin="round"/><ellipse cx="12" cy="13.2" rx="2.3" ry="3" fill="#253627" stroke="#57965C" stroke-width="1.1"/><path d="M9.6 11.2 L8.4 10.2 M14.4 11.2 L15.6 10.2 M9.4 15.6 L8.2 16.8 M14.6 15.6 L15.8 16.8 M10.8 10.4 a1.4 1.4 0 0 1 2.4 0" stroke="#57965C" stroke-width="1.05" stroke-linecap="round"/></svg>
<svg style="position:absolute;left:75px;top:570px;" width="14" height="14" viewBox="0 0 14 14" fill="none"><rect x="1.7" y="1.7" width="10.8" height="10.8" rx="1.6" fill="#5B3232" stroke="#DB5C5C" stroke-width="1.15"/></svg>
<div style="position:absolute;left:98px;top:567px;width:1px;height:20px;background:#43454A"></div>
<svg style="position:absolute;left:107px;top:570px;" width="16" height="14" viewBox="0 0 16 14" fill="none"><rect x="1.5" y="1.6" width="2.8" height="10.8" rx=".6" fill="#253627" stroke="#57965C" stroke-width="1.1"/><path d="M7.2 1.8 V12.2 L14.8 7 Z" fill="#253627" stroke="#57965C" stroke-width="1.1" stroke-linejoin="round"/></svg>
<svg style="position:absolute;left:135px;top:570px;" width="12" height="14" viewBox="0 0 12 14" fill="none"><rect x="1.4" y="1.6" width="2.6" height="10.8" rx=".5" stroke="#5A5D63" stroke-width="1.05"/><rect x="7.8" y="1.6" width="2.6" height="10.8" rx=".5" stroke="#5A5D63" stroke-width="1.05"/></svg>
<svg style="position:absolute;left:160px;top:570px;" width="14" height="15" viewBox="0 0 14 15" fill="none"><path d="M1.2 13.4 H12.8" stroke="#CED0D6" stroke-width="1.15" stroke-linecap="round"/><path d="M1.4 7.6 L6.8 3 L12.4 7.9 M8.4 8 H12.6 V3.8" stroke="#CED0D6" stroke-width="1.15" stroke-linecap="round" stroke-linejoin="round"/></svg>
<svg style="position:absolute;left:186px;top:569px;" width="14" height="16" viewBox="0 0 14 16" fill="none"><path d="M1.2 14.4 H12.8" stroke="#CED0D6" stroke-width="1.15" stroke-linecap="round"/><path d="M7 1.4 V11.2 M2.6 7.2 L7 11.4 L11.4 7.2" stroke="#CED0D6" stroke-width="1.15" stroke-linecap="round" stroke-linejoin="round"/></svg>
<svg style="position:absolute;left:212px;top:569px;" width="14" height="16" viewBox="0 0 14 16" fill="none"><path d="M1.2 14.4 H12.8" stroke="#CED0D6" stroke-width="1.15" stroke-linecap="round"/><path d="M7 11.6 V2 M2.6 6.4 L7 2 L11.4 6.4" stroke="#CED0D6" stroke-width="1.15" stroke-linecap="round" stroke-linejoin="round"/></svg>
<div style="position:absolute;left:235px;top:567px;width:1px;height:20px;background:#43454A"></div>
<svg style="position:absolute;left:244px;top:568px;" width="16" height="18" viewBox="0 0 16 18" fill="none"><circle cx="9.8" cy="6.8" r="4.6" fill="#4B2A2A" stroke="#DB5C5C" stroke-width="1.1"/><circle cx="6.3" cy="10.5" r="4.6" fill="#4B2A2A" stroke="#DB5C5C" stroke-width="1.1"/></svg>
<svg style="position:absolute;left:270px;top:568px;" width="16" height="18" viewBox="0 0 16 18" fill="none"><circle cx="8" cy="8.8" r="5.2" fill="#4B2A2A" stroke="#DB5C5C" stroke-width="1.1"/><path d="M2 14.8 L14.2 2.8" stroke="#2B2D30" stroke-width="3"/><path d="M2.2 14.6 L14 3" stroke="#CED0D6" stroke-width="1.1" stroke-linecap="round"/></svg>
<svg style="position:absolute;left:301px;top:569px;" width="6" height="16" viewBox="0 0 6 16" fill="none"><rect x="2.2" y="2.2" width="1.6" height="1.6" fill="#CED0D6"/><rect x="2.2" y="7.2" width="1.6" height="1.6" fill="#CED0D6"/><rect x="2.2" y="12.2" width="1.6" height="1.6" fill="#CED0D6"/></svg>
<svg style="position:absolute;left:1460px;top:570px;" width="14" height="14" viewBox="0 0 14 14" fill="none"><rect x="1.2" y="1.3" width="11.6" height="11.4" rx="1.6" stroke="#CED0D6" stroke-width="1.15"/><path d="M5.4 1.3 V12.7 M5.4 7 H12.8" stroke="#CED0D6" stroke-width="1.15"/></svg>
<svg style="position:absolute;left:48px;top:604px;" width="14" height="14" viewBox="0 0 14 14" fill="none"><path d="M1.1 6.9 L4.9 10.9 L13 2.7" stroke="#D78C5F" stroke-width="1.25" stroke-linecap="round" stroke-linejoin="round"/></svg>
<div style="position:absolute;left:262px;top:600px;width:22px;height:22px;border-radius:4px;background:#4E5157"></div>
<svg style="position:absolute;left:266px;top:604px;" width="14" height="14" viewBox="0 0 14 14" fill="none"><path d="M1.6 2 H12.4 L8.3 7 V12.2 L5.7 11 V7 Z" stroke="#DFE1E5" stroke-width="1.1" stroke-linejoin="round"/></svg>
<svg style="position:absolute;left:300px;top:608.3px;" width="12" height="8" viewBox="0 0 12 8" fill="none"><path d="M2.2 2.0 L6 6.0 L9.8 2.0" stroke="#B4B8BF" stroke-width="1.1" stroke-linecap="round" stroke-linejoin="round"/></svg>
<svg style="position:absolute;left:1420px;top:603px;" width="18" height="18" viewBox="0 0 18 18" fill="none"><path d="M8 1.4 V9.6 M1.6 7.6 H14.4" stroke="#5A5D63" stroke-width="1"/><circle cx="8.4" cy="13.6" r="1.9" stroke="#5A5D63" stroke-width="1"/><circle cx="13.4" cy="13.6" r="1.9" stroke="#5A5D63" stroke-width="1"/><path d="M10.3 13.2 h1.2" stroke="#5A5D63" stroke-width="1"/></svg>
<svg style="position:absolute;left:1455px;top:608.3px;" width="12" height="8" viewBox="0 0 12 8" fill="none"><path d="M2.2 2.0 L6 6.0 L9.8 2.0" stroke="#B4B8BF" stroke-width="1.1" stroke-linecap="round" stroke-linejoin="round"/></svg>
<svg style="position:absolute;left:340px;top:638.5px;" width="8" height="12" viewBox="0 0 8 12" fill="none"><path d="M2.05 2.4 L5.95 6 L2.05 9.6" stroke="#A0A3AA" stroke-width="1.1" stroke-linecap="round" stroke-linejoin="round"/></svg>
<svg style="position:absolute;left:340px;top:686.5px;" width="8" height="12" viewBox="0 0 8 12" fill="none"><path d="M2.05 2.4 L5.95 6 L2.05 9.6" stroke="#A0A3AA" stroke-width="1.1" stroke-linecap="round" stroke-linejoin="round"/></svg>
<svg style="position:absolute;left:357px;top:637px;" width="16" height="16" viewBox="0 0 16 16" fill="none"><circle cx="8" cy="7.6" r="6.6" fill="#4B3226" stroke="#D78C5F" stroke-width="1.1"/><path d="M10 5.8 C9.8 4.9 9 4.5 8 4.5 C6.9 4.5 6.1 5.1 6.1 6 C6.1 7.9 10.1 7 10.1 9.2 C10.1 10.2 9.2 10.8 8 10.8 C6.8 10.8 6 10.3 5.8 9.3" stroke="#C77D55" stroke-width="1.05" stroke-linecap="round"/></svg>
<svg style="position:absolute;left:357px;top:661px;" width="16" height="16" viewBox="0 0 16 16" fill="none"><circle cx="8" cy="7.6" r="6.6" fill="#4B3226" stroke="#D78C5F" stroke-width="1.1"/><path d="M6.4 10.8 V4.6 H8.4 a1.9 1.9 0 0 1 0 3.8 H6.4" stroke="#C77D55" stroke-width="1.05" stroke-linecap="round" stroke-linejoin="round"/></svg>
<svg style="position:absolute;left:358px;top:684px;" width="14" height="16" viewBox="0 0 14 16" fill="none"><rect x="2.2" y="1.4" width="9.4" height="3.4" rx=".8" fill="#3D3223" stroke="#D6AE58" stroke-width="1.05"/><rect x="2.2" y="6.3" width="9.4" height="3.4" rx=".8" fill="#3D3223" stroke="#D6AE58" stroke-width="1.05"/><rect x="2.2" y="11.2" width="9.4" height="3.4" rx=".8" fill="#3D3223" stroke="#D6AE58" stroke-width="1.05"/></svg>
<!-- sans text -->
<div class="t" style="left:48.0px;top:13.3px;color:#DFE1E5;font-size:13.2px;font-weight:bold;-webkit-text-stroke:0.08px;letter-spacing:-0.031px;">Project</div>
<div class="t" style="left:88.1px;top:50.3px;color:#DFE1E5;font-size:13.2px;font-weight:bold;-webkit-text-stroke:0.08px;letter-spacing:0.156px;">hedera-services</div>
<div class="t" style="left:197.4px;top:50.3px;color:#6F737A;font-size:13.5px;letter-spacing:0.483px;">~/hedera-services</div>
<div class="t" style="left:107.1px;top:74.3px;color:#DFE1E5;font-size:13.5px;letter-spacing:0.450px;">.github</div>
<div class="t" style="left:107.1px;top:98.3px;color:#D2A573;font-size:13.5px;letter-spacing:0.146px;">.gradle</div>
<div class="t" style="left:107.1px;top:122.3px;color:#D2A573;font-size:13.5px;letter-spacing:0.144px;">.idea</div>
<div class="t" style="left:107.1px;top:146.3px;color:#D2A573;font-size:13.5px;letter-spacing:0.094px;">build</div>
<div class="t" style="left:107.1px;top:170.3px;color:#DFE1E5;font-size:13.5px;letter-spacing:0.361px;">config</div>
<div class="t" style="left:107.1px;top:194.3px;color:#DFE1E5;font-size:13.5px;letter-spacing:0.217px;">docs</div>
<div class="t" style="left:107.1px;top:218.3px;color:#DFE1E5;font-size:13.5px;letter-spacing:0.209px;">example-apps</div>
<div class="t" style="left:107.1px;top:242.3px;color:#DFE1E5;font-size:13.5px;letter-spacing:0.111px;">gradle</div>
<div class="t" style="left:107.1px;top:266.3px;color:#DFE1E5;font-size:13.2px;font-weight:bold;-webkit-text-stroke:0.08px;letter-spacing:-0.302px;">hapi</div>
<div class="t" style="left:107.1px;top:290.3px;color:#DFE1E5;font-size:13.2px;font-weight:bold;-webkit-text-stroke:0.08px;letter-spacing:0.179px;">hedera-dependency-versions</div>
<div class="t" style="left:107.1px;top:314.3px;color:#DFE1E5;font-size:13.5px;letter-spacing:0.411px;">hedera-node</div>
<div class="t" style="left:107.1px;top:338.3px;color:#DFE1E5;font-size:13.5px;letter-spacing:0.468px;">platform-sdk</div>
<div class="t" style="left:191.4px;top:338.3px;color:#DFE1E5;font-size:13.2px;font-weight:bold;-webkit-text-stroke:0.08px;letter-spacing:0.040px;">[swirlds-platform]</div>
<div class="t" style="left:107.1px;top:362.3px;color:#DFE1E5;font-size:13.5px;letter-spacing:0.375px;">.gitignore</div>
<div class="t" style="left:107.1px;top:386.3px;color:#DFE1E5;font-size:13.5px;letter-spacing:0.211px;">.remarkrc</div>
<div class="t" style="left:107.1px;top:410.3px;color:#DFE1E5;font-size:13.5px;letter-spacing:0.277px;">.snyk</div>
<div class="t" style="left:107.1px;top:434.3px;color:#DFE1E5;font-size:13.5px;letter-spacing:0.334px;">codecov.yml</div>
<div class="t" style="left:107.1px;top:458.3px;color:#DFE1E5;font-size:13.5px;letter-spacing:0.399px;">developers.properties</div>
<div class="t" style="left:107.1px;top:482.3px;color:#DFE1E5;font-size:13.5px;letter-spacing:0.352px;">gradle.properties</div>
<div class="t" style="left:107.1px;top:506.3px;color:#DFE1E5;font-size:13.5px;letter-spacing:0.231px;height:11.7px;overflow:hidden;">gradlew</div>
<div class="t" style="left:379.3px;top:13.3px;color:#DFE1E5;font-size:13.5px;letter-spacing:0.080px;">ServicesMain.java</div>
<div class="t" style="left:832.3px;top:44.8px;color:#7D818C;font-size:12.2px;letter-spacing:-0.042px;">Kim Rader +12</div>
<div class="t" style="left:980.5px;top:206.3px;color:#7D818C;font-size:12.2px;letter-spacing:0.149px;">Neeharika Sompalli +8</div>
<div class="t" style="left:1355.3px;top:46.4px;color:#BCBEC4;font-size:12.5px;letter-spacing:-1.353px;">19</div>
<div class="t" style="left:1390.0px;top:46.4px;color:#BCBEC4;font-size:12.5px;letter-spacing:-0.353px;">6</div>
<div class="t" style="left:1420.0px;top:46.4px;color:#BCBEC4;font-size:12.5px;letter-spacing:-1.492px;">11</div>
<div class="t" style="left:48.0px;top:529.6px;color:#DFE1E5;font-size:13.2px;font-weight:bold;-webkit-text-stroke:0.08px;letter-spacing:-0.006px;">Debug</div>
<div class="t" style="left:137.3px;top:529.6px;color:#DFE1E5;font-size:13.5px;letter-spacing:-0.045px;">jvmSolo</div>
<div class="t" style="left:342.0px;top:567.7px;color:#DFE1E5;font-size:13.5px;letter-spacing:0.131px;">Threads &amp; Variables</div>
<div class="t" style="left:491.0px;top:567.7px;color:#DFE1E5;font-size:13.5px;letter-spacing:0.167px;">Console</div>
<div class="t" style="left:67.0px;top:602.3px;color:#DFE1E5;font-size:13.5px;letter-spacing:-0.144px;">"main"@1 in ...ain": RUNNING</div>
<div class="t" style="left:71.4px;top:635.3px;color:#DFE1E5;font-size:13.5px;">main:175, ServicesMain</div>
<div class="t" style="left:220.3px;top:635.3px;color:#DFE1E5;font-size:13.5px;font-style:italic;letter-spacing:0.138px;width:102.7px;overflow:hidden;">(com.hedera.no</div>
<div class="t" style="left:316.8px;top:635.3px;color:#DFE1E5;font-size:13.5px;font-style:italic;width:6.2px;overflow:hidden;letter-spacing:0.5px;">de</div>
<div class="t" style="left:376.4px;top:634.8px;color:#DFE1E5;font-size:13.5px;letter-spacing:0.347px;">static</div>
<div class="t" style="left:414.2px;top:634.8px;color:#868A91;font-size:13.5px;letter-spacing:0.232px;">members of ServicesMain</div>
<div class="t" style="left:376.4px;top:658.8px;color:#E8B08A;font-size:13.5px;letter-spacing:-0.041px;">args</div>
<div class="t" style="left:407.7px;top:658.8px;color:#D5D7DC;font-size:13.5px;letter-spacing:-0.891px;">=</div>
<div class="t" style="left:420.0px;top:658.8px;color:#868A91;font-size:13.5px;letter-spacing:0.248px;">{String[0]@2415}</div>
<div class="t" style="left:531.5px;top:658.8px;color:#DFE1E5;font-size:13.5px;letter-spacing:0.742px;">[]</div>
<div class="t" style="left:376.4px;top:682.8px;color:#E8B08A;font-size:13.5px;letter-spacing:0.292px;">hedera</div>
<div class="t" style="left:424.7px;top:682.8px;color:#D5D7DC;font-size:13.5px;letter-spacing:-0.891px;">=</div>
<div class="t" style="left:437.0px;top:682.8px;color:#868A91;font-size:13.5px;letter-spacing:0.075px;">{Hedera@5321}</div>

</div>
</body></html>
